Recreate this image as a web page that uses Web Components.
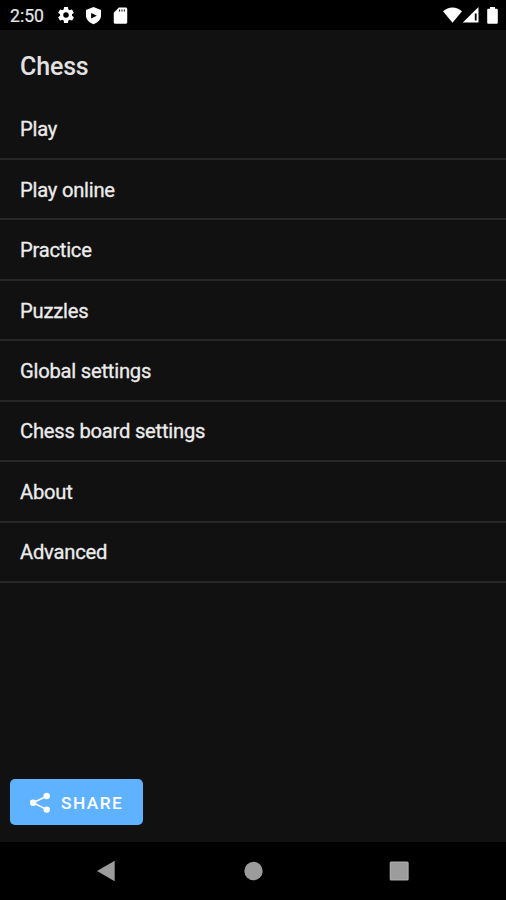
<!DOCTYPE html>
<html lang="en">
<head>
<meta charset="UTF-8">
<meta name="viewport" content="width=device-width, initial-scale=1.0">
<title>Chess</title>
<style>
    html, body {
        margin: 0;
        height: 100%;
        overflow: hidden;
        background-color: #000;
    }
</style>
</head>
<body>
<chess-app></chess-app>

<script>
class StatusBar extends HTMLElement {
    connectedCallback() {
        const time = this.getAttribute('time') || '0:00';

        this.attachShadow({ mode: 'open' });
        this.shadowRoot.innerHTML = `
            <style>
                :host {
                    display: flex;
                    align-items: center;
                    justify-content: space-between;
                    box-sizing: border-box;
                    height: 30px;
                    padding: 0 8px 0 10px;
                    background-color: #000;
                    color: #e8e8e8;
                    font-size: 17.6px;
                    -webkit-text-stroke: 0.2px #e8e8e8;
                }
                .group {
                    display: flex;
                    align-items: center;
                }
                .time {
                    width: 46px;
                    line-height: 30px;
                    padding-top: 2px;
                }
                svg {
                    display: block;
                    fill: #fff;
                    -webkit-text-stroke: 0;
                }
                .gear { width: 20px; height: 20px; }
                .shield { width: 19px; height: 19px; margin-left: 8px; }
                .card { width: 19px; height: 19px; margin-left: 8px; }
                .battery { margin-left: 8px; }
            </style>
            <div class="group">
                <span class="time">${time}</span>
                <svg class="gear" viewBox="0 0 24 24"><path d="M19.14 12.94c.04-.3.06-.61.06-.94s-.02-.64-.07-.94l2.03-1.58a.49.49 0 0 0 .12-.61l-1.92-3.32a.49.49 0 0 0-.59-.22l-2.39.96a7 7 0 0 0-1.62-.94l-.36-2.54a.48.48 0 0 0-.48-.41h-3.84a.47.47 0 0 0-.47.41l-.36 2.54c-.59.24-1.13.57-1.62.94l-2.39-.96a.48.48 0 0 0-.59.22L2.74 8.87a.48.48 0 0 0 .12.61l2.03 1.58a6 6 0 0 0 0 1.88l-2.03 1.58a.49.49 0 0 0-.12.61l1.92 3.32c.12.22.37.29.59.22l2.39-.96c.5.38 1.03.7 1.62.94l.36 2.54c.05.24.24.41.48.41h3.84c.24 0 .44-.17.47-.41l.36-2.54a7 7 0 0 0 1.62-.94l2.39.96c.22.08.47 0 .59-.22l1.92-3.32a.47.47 0 0 0-.12-.61zM12 15.3a3.3 3.3 0 1 1 0-6.6 3.3 3.3 0 0 1 0 6.6z"/></svg>
                <svg class="shield" viewBox="0 0 24 24"><path fill-rule="evenodd" d="M12 1.3 21.500 5v7c0 5-4 9.200-9.500 11-5.500-1.800-9.500-6-9.500-11V5zM9 8.800v6.900L16.200 12.200z"/></svg>
                <svg class="card" viewBox="0 0 24 24"><path fill-rule="evenodd" d="M18.500 2H10L3.500 8.500v12c0 1.100.9 2 2 2h13c1.100 0 2-.9 2-2V4c0-1.100-.9-2-2-2zM10.200 4.500h1.300v2.500h-1.300zM13.200 4.500h1.300v2.500h-1.300zM16.200 4.500h1.300v2.500h-1.300z"/></svg>
            </div>
            <div class="group">
                <svg width="19" height="16" viewBox="0 0 19 16"><path d="M0 4.200C5.300-.9 13.700-.9 19 4.200L9.500 15.700z"/></svg>
                <svg width="17" height="16" viewBox="0 0 17 16"><path fill-rule="evenodd" d="M16.500 0v15.500H.8zM12.800 6.500v7H14.600v-7z"/></svg>
                <svg class="battery" width="11" height="17" viewBox="0 0 11 17"><path d="M3 0h5v1.800H9.500c.8 0 1.300.6 1.300 1.300v12.300c0 .8-.5 1.300-1.300 1.300h-8C.7 16.700.2 16.200.2 15.400V3.100c0-.8.500-1.300 1.300-1.300H3z"/></svg>
            </div>
        `;
    }
}
customElements.define('status-bar', StatusBar);

class AppHeader extends HTMLElement {
    connectedCallback() {
        this.attachShadow({ mode: 'open' });
        this.shadowRoot.innerHTML = `
            <style>
                :host {
                    display: flex;
                    align-items: center;
                    box-sizing: border-box;
                    height: 69.5px;
                    padding: 3px 20px 0;
                }
                h1 {
                    margin: 0;
                    color: #e2e2e2;
                    font-size: 25px;
                    font-weight: 500;
                    letter-spacing: -0.15px;
                }
            </style>
            <h1><slot></slot></h1>
        `;
    }
}
customElements.define('app-header', AppHeader);

class MenuItem extends HTMLElement {
    connectedCallback() {
        this.attachShadow({ mode: 'open' });
        this.shadowRoot.innerHTML = `
            <style>
                :host {
                    display: flex;
                    align-items: center;
                    box-sizing: border-box;
                    height: 60.45px;
                    padding: 1px 20px 0;
                    border-bottom: 2px solid #272727;
                    color: #ececec;
                    font-size: 20.2px;
                    letter-spacing: -0.23px;
                    -webkit-text-stroke: 0.3px #ececec;
                    cursor: pointer;
                }
            </style>
            <span><slot></slot></span>
        `;
    }
}
customElements.define('menu-item', MenuItem);

class ShareButton extends HTMLElement {
    connectedCallback() {
        this.attachShadow({ mode: 'open' });
        this.shadowRoot.innerHTML = `
            <style>
                :host {
                    display: block;
                }
                button {
                    display: flex;
                    align-items: center;
                    width: 133px;
                    height: 46px;
                    padding: 1px 0 0 17px;
                    border: 0;
                    border-radius: 5px;
                    background-color: #5fb2ff;
                    color: #fff;
                    font: 500 17.3px Roboto, sans-serif;
                    letter-spacing: 1.45px;
                    cursor: pointer;
                }
                svg {
                    width: 26px;
                    height: 26px;
                    margin-right: 8px;
                    fill: #fff;
                }
            </style>
            <button>
                <svg viewBox="0 0 26 26">
                    <path d="M20 6 6 12.700l14 7" fill="none" stroke="#fff" stroke-width="1.500"/>
                    <circle cx="19.700" cy="6" r="3.200"/>
                    <circle cx="6.100" cy="12.700" r="3.200"/>
                    <circle cx="19.700" cy="19.600" r="3.200"/>
                </svg>
                <slot></slot>
            </button>
        `;
    }
}
customElements.define('share-button', ShareButton);

class NavBar extends HTMLElement {
    connectedCallback() {
        this.attachShadow({ mode: 'open' });
        this.shadowRoot.innerHTML = `
            <style>
                :host {
                    display: flex;
                    align-items: center;
                    justify-content: space-between;
                    box-sizing: border-box;
                    height: 58px;
                    padding: 0 96px;
                    background-color: #000;
                }
                svg {
                    display: block;
                    width: 22px;
                    height: 22px;
                    fill: #9c9c9c;
                }
            </style>
            <svg viewBox="0 0 22 22"><path d="M1 11 18.700.8v20.400z"/></svg>
            <svg viewBox="0 0 22 22"><circle cx="11.500" cy="11" r="9.200"/></svg>
            <svg viewBox="0 0 22 22"><rect x="1.700" y="1.500" width="19" height="19" rx="1.500" fill="#a8a8a8"/><rect x="3.200" y="3" width="16" height="16"/></svg>
        `;
    }
}
customElements.define('nav-bar', NavBar);

class ChessApp extends HTMLElement {
    connectedCallback() {
        const items = ['Play', 'Play online', 'Practice', 'Puzzles', 'Global settings', 'Chess board settings', 'About', 'Advanced'];

        this.attachShadow({ mode: 'open' });
        this.shadowRoot.innerHTML = `
            <style>
                :host {
                    display: flex;
                    flex-direction: column;
                    height: 100vh;
                    background-color: #111;
                    font-family: Roboto, sans-serif;
                }
                main {
                    flex: 1;
                }
                share-button {
                    padding: 0 10px 17px;
                }
            </style>
            <status-bar time="2:50"></status-bar>
            <app-header>Chess</app-header>
            <main>
                ${items.map(item => `<menu-item>${item}</menu-item>`).join('')}
            </main>
            <share-button>SHARE</share-button>
            <nav-bar></nav-bar>
        `;
    }
}
customElements.define('chess-app', ChessApp);
</script>
</body>
</html>
